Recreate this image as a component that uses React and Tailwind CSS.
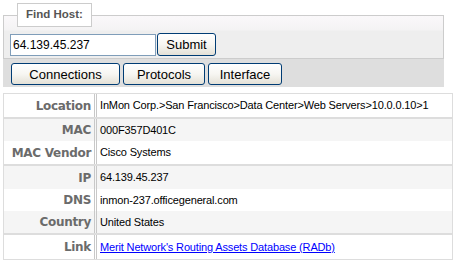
const ROW_GROUPS = [
  [{ label: 'Location', value: 'InMon Corp.>San Francisco>Data Center>Web Servers>10.0.0.10>1', bg: 'bg-white', h: 'h-[23px]' }],
  [
    { label: 'MAC', value: '000F357D401C', bg: 'bg-[#f5f5f5]', h: 'h-[22px]' },
    { label: 'MAC Vendor', value: 'Cisco Systems', bg: 'bg-white', h: 'h-[23px]' },
  ],
  [
    { label: 'IP', value: '64.139.45.237', bg: 'bg-[#f5f5f5]', h: 'h-[23px]' },
    { label: 'DNS', value: 'inmon-237.officegeneral.com', bg: 'bg-white', h: 'h-[22px]' },
    { label: 'Country', value: 'United States', bg: 'bg-[#f5f5f5]', h: 'h-[22px]' },
  ],
  [{ label: 'Link', value: "Merit Network's Routing Assets Database (RADb)", link: true, bg: 'bg-white', h: 'h-[24px]' }],
]

function XpButton({ children, className = '' }) {
  return (
    <button
      className={`h-[22px] rounded-[3px] border border-[#003c74] bg-gradient-to-b from-white via-[#f7f6f2] to-[#e4e1d7] text-[13px] leading-none text-black ${className}`}
    >
      {children}
    </button>
  )
}

export default function App() {
  return (
    <div className="w-[458px] h-[266px] bg-white pl-[3px] font-['Liberation_Sans',Arial,sans-serif]">
      <fieldset className="mt-[3px] w-[441px] border border-[#cccccc] bg-[linear-gradient(to_bottom,#faf8fa,#f4f3f4_14px,#eeeeee_15px)] pb-[2px]">
        <legend className="ml-[13px] flex h-[24px] w-[75px] items-center justify-center border border-[#cccccc] bg-white text-[11.5px] font-bold text-[#555555]">
          Find Host:
        </legend>
        <div className="flex items-end pt-[6px] pl-[6px]">
          <input
            defaultValue="64.139.45.237"
            className="h-[22px] w-[146px] border border-[#7f9db9] bg-white pl-[2px] text-[12px] text-black outline-none"
          />
          <XpButton className="ml-[1px] h-[23px] w-[59px]">Submit</XpButton>
        </div>
      </fieldset>

      <div className="flex h-[28px] w-[441px] gap-[3px] bg-[#dedede] pt-[4px] pl-[8px]">
        <XpButton className="w-[109px]">Connections</XpButton>
        <XpButton className="w-[82px]">Protocols</XpButton>
        <XpButton className="w-[74px]">Interface</XpButton>
      </div>

      <div className="mt-[6px] w-[450px] border border-[#dddddd]">
        {ROW_GROUPS.map((group, gi) => (
          <div key={gi} className={gi > 0 ? 'border-t-[2px] border-[#dddddd]' : ''}>
            {group.map(row => (
              <div key={row.label} className={`flex items-center ${row.h} ${row.bg}`}>
                <div className="flex h-full w-[93px] shrink-0 items-center justify-end border-r-[3px] border-double border-[#c8c8c8] pr-[3px] font-['DejaVu_Sans',Verdana,sans-serif] text-[12px] font-bold tracking-[-0.3px] text-[#6b6b6b]">
                  {row.label}
                </div>
                <div className="pl-[3px] text-[11px] tracking-[-0.15px] text-black">
                  {row.link ? (
                    <a href="#" className="text-[#0000ff] underline">{row.value}</a>
                  ) : (
                    row.value
                  )}
                </div>
              </div>
            ))}
          </div>
        ))}
      </div>
    </div>
  )
}
